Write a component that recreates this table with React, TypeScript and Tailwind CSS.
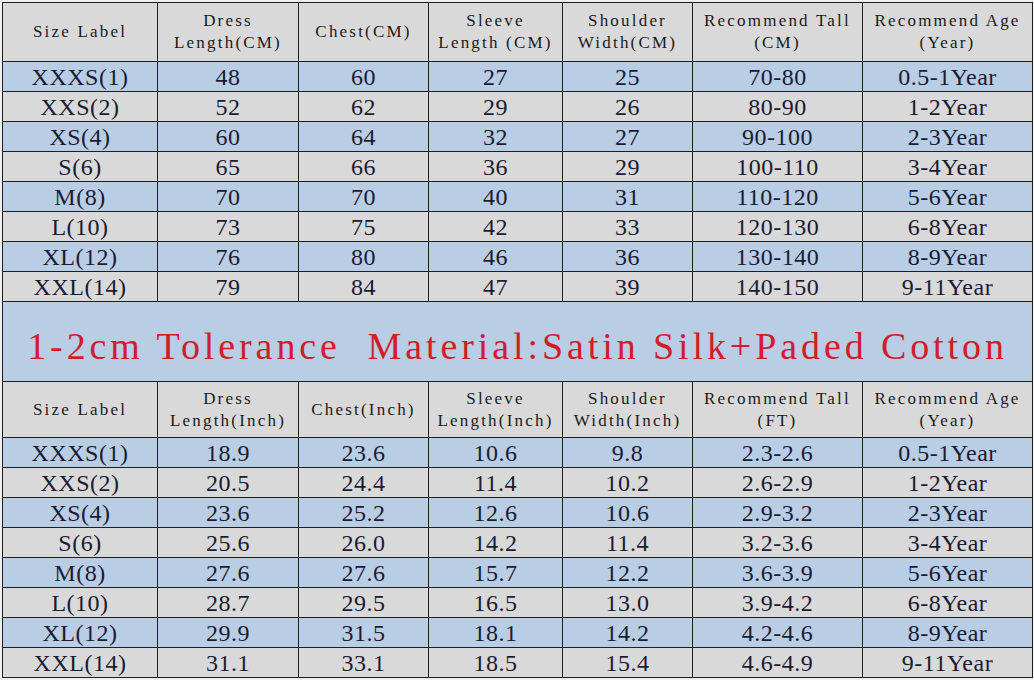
const cmRows = [
  ["XXXS(1)", "48", "60", "27", "25", "70-80", "0.5-1Year"],
  ["XXS(2)", "52", "62", "29", "26", "80-90", "1-2Year"],
  ["XS(4)", "60", "64", "32", "27", "90-100", "2-3Year"],
  ["S(6)", "65", "66", "36", "29", "100-110", "3-4Year"],
  ["M(8)", "70", "70", "40", "31", "110-120", "5-6Year"],
  ["L(10)", "73", "75", "42", "33", "120-130", "6-8Year"],
  ["XL(12)", "76", "80", "46", "36", "130-140", "8-9Year"],
  ["XXL(14)", "79", "84", "47", "39", "140-150", "9-11Year"],
];

const inchRows = [
  ["XXXS(1)", "18.9", "23.6", "10.6", "9.8", "2.3-2.6", "0.5-1Year"],
  ["XXS(2)", "20.5", "24.4", "11.4", "10.2", "2.6-2.9", "1-2Year"],
  ["XS(4)", "23.6", "25.2", "12.6", "10.6", "2.9-3.2", "2-3Year"],
  ["S(6)", "25.6", "26.0", "14.2", "11.4", "3.2-3.6", "3-4Year"],
  ["M(8)", "27.6", "27.6", "15.7", "12.2", "3.6-3.9", "5-6Year"],
  ["L(10)", "28.7", "29.5", "16.5", "13.0", "3.9-4.2", "6-8Year"],
  ["XL(12)", "29.9", "31.5", "18.1", "14.2", "4.2-4.6", "8-9Year"],
  ["XXL(14)", "31.1", "33.1", "18.5", "15.4", "4.6-4.9", "9-11Year"],
];

const cmHead = [
  ["Size Label"],
  ["Dress", "Length(CM)"],
  ["Chest(CM)"],
  ["Sleeve", "Length (CM)"],
  ["Shoulder", "Width(CM)"],
  ["Recommend Tall", "(CM)"],
  ["Recommend Age", "(Year)"],
];

const inchHead = [
  ["Size Label"],
  ["Dress", "Length(Inch)"],
  ["Chest(Inch)"],
  ["Sleeve", "Length(Inch)"],
  ["Shoulder", "Width(Inch)"],
  ["Recommend Tall", "(FT)"],
  ["Recommend Age", "(Year)"],
];

function HeadRow({ cells, h }: { cells: string[][]; h: string }) {
  return (
    <tr className={`${h} bg-[#d9d9d9]`}>
      {cells.map((lines, i) => (
        <td
          key={i}
          className="border border-[#1e1e1e] text-center align-middle text-[17px] leading-[22px] tracking-[2.2px] text-[#1a1a1a] whitespace-pre"
          style={{ fontFamily: '"Liberation Serif", serif' }}
        >
          {lines.map((l, j) => (
            <div key={j}>{l}</div>
          ))}
        </td>
      ))}
    </tr>
  );
}

function DataRows({ rows }: { rows: string[][] }) {
  return (
    <>
      {rows.map((r, i) => (
        <tr key={i} className={`h-[30px] ${i % 2 === 0 ? "bg-[#b9cde5]" : "bg-[#d9d9d9]"}`}>
          {r.map((c, j) => (
            <td
              key={j}
              className="border border-[#1e1e1e] text-center align-middle text-[24px] leading-[28px] text-[#1b1b33] tracking-[0.5px]"
              style={{ fontFamily: '"Liberation Serif", serif' }}
            >
              {c}
            </td>
          ))}
        </tr>
      ))}
    </>
  );
}

export default function App() {
  return (
    <div className="w-[1034px] h-[680px] bg-[#eeeeee] pl-[2px] pt-[2px] overflow-hidden">
      <table className="table-fixed border-collapse w-[1030px]">
        <colgroup>
          <col className="w-[155px]" />
          <col className="w-[141px]" />
          <col className="w-[130px]" />
          <col className="w-[134px]" />
          <col className="w-[130px]" />
          <col className="w-[170px]" />
          <col className="w-[170px]" />
        </colgroup>
        <tbody>
          <HeadRow cells={cmHead} h="h-[59px]" />
          <DataRows rows={cmRows} />
          <tr className="h-[80px] bg-[#b9cde5]">
            <td
              colSpan={7}
              className="border border-[#1e1e1e] pt-[8px] text-center align-middle text-[38px] leading-[42px] tracking-[3.9px] text-[#d21c2a] whitespace-pre"
              style={{ fontFamily: '"Liberation Serif", serif' }}
            >
              1-2cm Tolerance  Material:Satin Silk+Paded Cotton
            </td>
          </tr>
          <HeadRow cells={inchHead} h="h-[56px]" />
          <DataRows rows={inchRows} />
        </tbody>
      </table>
    </div>
  );
}
